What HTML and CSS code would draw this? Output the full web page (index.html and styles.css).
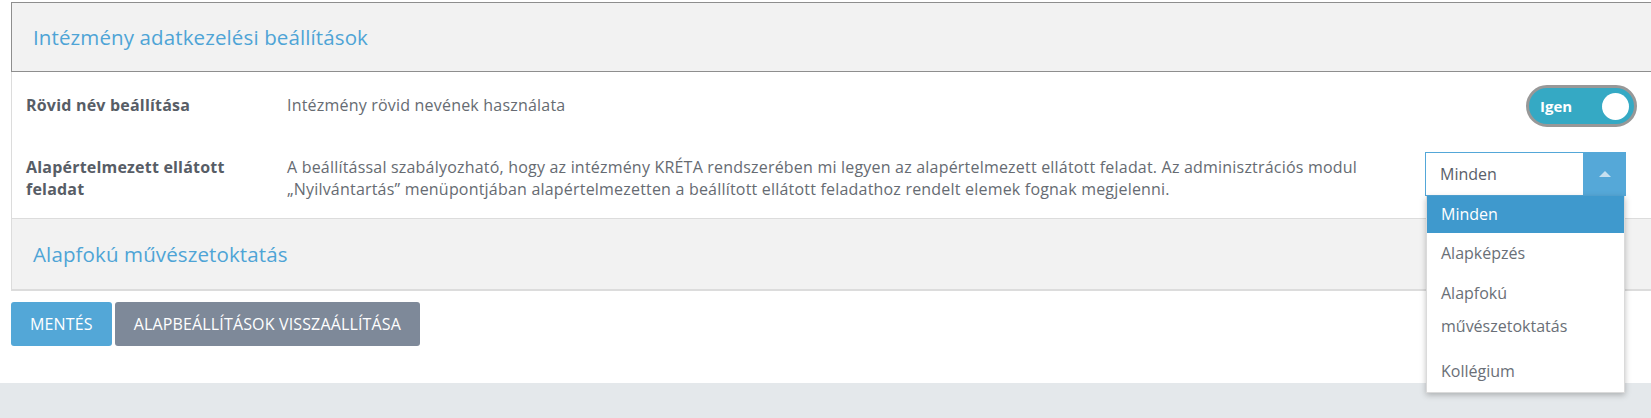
FILE: index.html
```html
<!DOCTYPE html>
<html lang="hu">
<head>
  <meta charset="UTF-8">
  <title>Intézmény adatkezelési beállítások</title>
  <link rel="stylesheet" href="styles.css">
</head>
<body>

<div class="main">
  <div class="panel">
    <!-- Fő szekció -->
    <div class="panel-head">
      <h2>Intézmény adatkezelési beállítások</h2>
    </div>

    <div class="rows">
      <div class="row row-short">
        <div class="label">Rövid név beállítása</div>
        <div class="desc">Intézmény rövid nevének használata</div>
        <div class="control">
          <div class="toggle">
            <span class="toggle-text">Igen</span>
            <span class="toggle-knob"></span>
          </div>
        </div>
      </div>

      <div class="row row-task">
        <div class="label">Alapértelmezett ellátott feladat</div>
        <div class="desc">A beállítással szabályozható, hogy az intézmény KRÉTA rendszerében mi legyen az alapértelmezett ellátott feladat. Az adminisztrációs modul „Nyilvántartás” menüpontjában alapértelmezetten a beállított ellátott feladathoz rendelt elemek fognak megjelenni.</div>
        <div class="control">
          <div class="select">
            <span class="select-value">Minden</span>
            <span class="select-arrow"><span class="caret"></span></span>
            <ul class="dropdown">
              <li class="selected">Minden</li>
              <li>Alapképzés</li>
              <li class="wrap">Alapfokú művészetoktatás</li>
              <li>Kollégium</li>
            </ul>
          </div>
        </div>
      </div>
    </div>

    <!-- Alszekció -->
    <div class="panel-head sub">
      <h2>Alapfokú művészetoktatás</h2>
    </div>
  </div>

  <div class="actions">
    <button class="btn btn-save">Mentés</button>
    <button class="btn btn-reset">Alapbeállítások visszaállítása</button>
  </div>
</div>

<div class="band"></div>

</body>
</html>
```

FILE: styles.css
```css
/* Alap */
html, body {
  height: 100%;
}
body {
  margin: 0;
  font-family: 'Open Sans', 'Noto Sans', sans-serif;
  color: #5f656d;
  background: #fff;
  display: flex;
  flex-direction: column;
  min-height: 100vh;
  overflow: hidden;
}
.main {
  padding-top: 2px;
  padding-bottom: 37px;
}

/* Panel */
.panel {
  margin-left: 11px;
}
.panel-head {
  background: #f2f2f2;
  border: 1px solid #8e8e8e;
  border-right: none;
  padding: 21px 0 21px 21px;
}
.panel-head h2 {
  margin: 0;
  font-size: 20.5px;
  font-weight: 400;
  line-height: 26px;
  letter-spacing: 0.12px;
  color: #4ea4d6;
}
.panel-head.sub {
  border: none;
  border-left: 1px solid #dcdcdc;
  border-top: 1px solid #dcdcdc;
  border-bottom: 2px solid #dcdcdc;
  padding: 22px 0 22px 21px;
}

.rows {
  border-left: 1px solid #dcdcdc;
  padding-left: 14px;
}
.row {
  display: grid;
  grid-template-columns: 261px 1fr 251px;
}
.row-short {
  align-items: center;
  padding: 13px 0 12px;
}
.row-task {
  align-items: start;
  padding: 13px 0 18px;
}
.row-task .label,
.row-task .desc {
  margin-top: 5px;
}
.label {
  font-size: 16px;
  font-weight: 700;
  line-height: 21.7px;
  letter-spacing: 0.2px;
  color: #575d66;
  padding-right: 30px;
}
.desc {
  font-size: 16px;
  line-height: 21.7px;
  letter-spacing: 0.2px;
  color: #666b72;
}
.control {
  display: flex;
}
.row-short .control {
  justify-content: flex-end;
  padding-right: 14px;
}
.row-task .control {
  padding-left: 25px;
}

/* Kapcsoló */
.toggle {
  width: 111px;
  height: 42px;
  box-sizing: border-box;
  border: 3px solid #989898;
  border-radius: 21px;
  background: #35a9c4;
  display: flex;
  align-items: center;
  justify-content: space-between;
  padding: 0 5px 0 11px;
}
.toggle-text {
  color: #fff;
  font-size: 15px;
  font-weight: 700;
}
.toggle-knob {
  width: 27px;
  height: 27px;
  border-radius: 50%;
  background: #fff;
}

/* Legördülő */
.select {
  position: relative;
  width: 201px;
  height: 44px;
  box-sizing: border-box;
  border: 1px solid #53a7d8;
  display: flex;
  font-size: 16px;
}
.select-value {
  flex: 1;
  padding-left: 14px;
  line-height: 42px;
  color: #5a6069;
}
.select-arrow {
  width: 43px;
  margin: -1px -1px -1px 0;
  background: #55a8d8;
  display: flex;
  align-items: center;
  justify-content: center;
}
.caret {
  width: 0;
  height: 0;
  border-left: 6px solid transparent;
  border-right: 6px solid transparent;
  border-bottom: 6px solid #c6e0f0;
}
.dropdown {
  position: absolute;
  top: calc(100% + 1px);
  left: 0;
  width: 199px;
  margin: 0;
  padding: 0 0 1px;
  list-style: none;
  background: #fff;
  border: 1px solid #dadada;
  border-top: none;
  box-shadow: 0 2px 6px rgba(0, 0, 0, 0.25);
  z-index: 10;
  box-sizing: border-box;
}
.dropdown li {
  padding: 4px 14px 3px;
  line-height: 33px;
  color: #6a6f77;
}
.dropdown li.selected {
  padding: 2px 14px;
  background: #3f99cd;
  color: #fff;
}
.dropdown li.wrap {
  padding: 4px 60px 8px 14px;
}

/* Gombok */
.actions {
  display: flex;
  gap: 3px;
  margin: 11px 0 0 11px;
}
.btn {
  height: 44px;
  padding: 0 19px;
  border: none;
  border-radius: 3px;
  font-family: 'Open Sans', 'Noto Sans', sans-serif;
  font-size: 16px;
  letter-spacing: 0.15px;
  text-transform: uppercase;
  color: #fff;
  cursor: pointer;
}
.btn-save {
  background: #53a7d7;
}
.btn-reset {
  background: #7e8999;
}

.band {
  flex: 1;
  background: #e4e8eb;
}
```
